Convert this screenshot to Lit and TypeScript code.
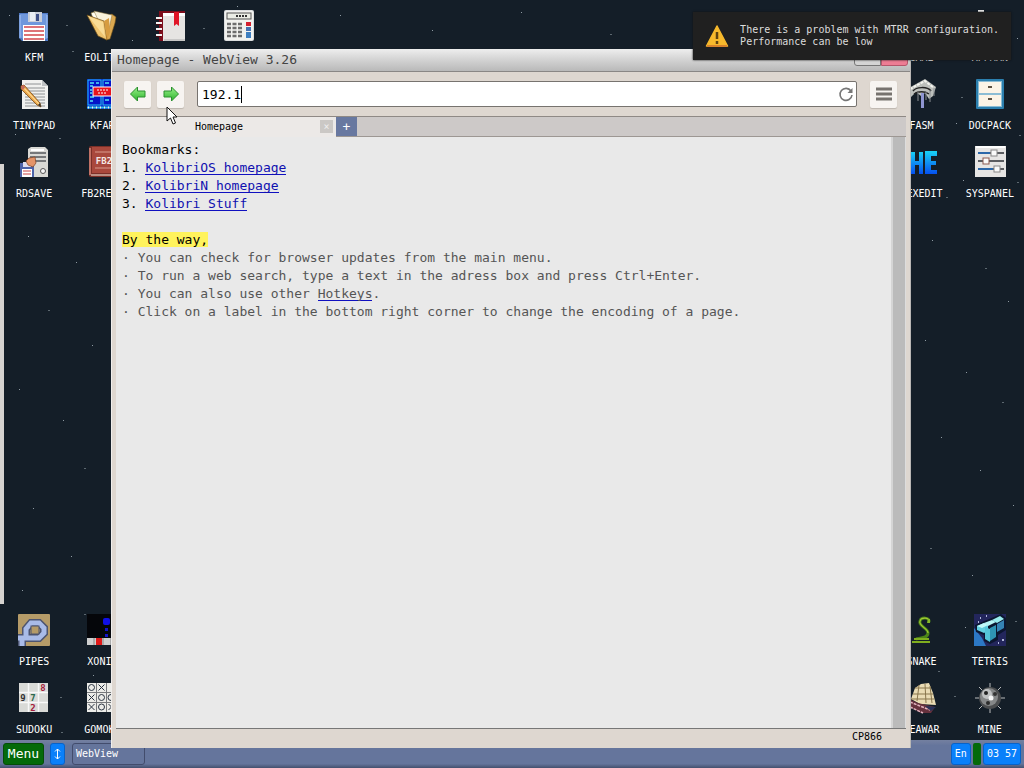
import { LitElement, html, css, svg, nothing } from "lit";
import { customElement } from "lit/decorators.js";

type Item = { name: string; art: unknown; col: number };

const floppy = svg`
  <path d="M1 3h29v28H4l-3-3z" fill="#4f78c4"/><path d="M2 4h27v25H5l-3-2z" fill="#6f97dc"/>
  <rect x="10" y="2" width="14" height="10" fill="#c9ced8"/><rect x="12" y="2" width="5" height="9" fill="#e9edf2"/><rect x="18" y="4" width="3" height="7" fill="#3d4f86"/>
  <rect x="5" y="15" width="22" height="16" fill="#fff"/><path d="M6 17h20M6 21h20M6 25h20M6 29h20" stroke="#d4454c" stroke-width="1.6"/>
  <path d="M2 5v23M29 5v23" stroke="#a9c6f7"/>`;

const folder = svg`
  <path d="M21 6l5-2 4 3-1 6-5 16-4 1z" fill="#dba850" stroke="#6b4b12" stroke-width=".6"/>
  <path d="M5 3l3-1 16 5-5 20-6-2z" fill="#fffdf2" stroke="#8a7338" stroke-width=".6"/><path d="M8 1l18 4-3 14-4 6z" fill="#f8f2dc" stroke="#8a7338" stroke-width=".5"/>
  <path d="M1 5l17 6 3 19-9-4z" fill="#efc470" stroke="#6b4b12" stroke-width=".7"/><path d="M2 6l15 6 2 15z" fill="#f9dc97"/><path d="M18 11l5-3 1 14-3 8z" fill="#d79c40"/>`;

const notebook = svg`
  <rect x="4" y="1" width="26" height="30" fill="#7d0e1c"/><rect x="8" y="3" width="22" height="28" fill="#e6e4e2"/><path d="M8 3h22v3H8z" fill="#fff"/>
  <path d="M19 2h5v14l-2.500-2-2.500 2z" fill="#e01527"/><path d="M1 8h6M1 13h6M1 19h6M1 25h6" stroke="#f4f4f4" stroke-width="2"/>
  <path d="M1 9.500h5M1 14.500h5M1 20.500h5M1 26.500h5" stroke="#4a0a10"/><path d="M9 30h21" stroke="#aaa"/>`;

const calc = svg`
  <rect x="1" y="0" width="30" height="31" rx="2" fill="#dcdedf"/><rect x="2" y="1" width="28" height="29" rx="1" fill="#f2f2ef"/>
  <rect x="4" y="3" width="24" height="6" fill="#eceee6" stroke="#555"/><path d="M13 6h12" stroke="#333" stroke-width="2" stroke-dasharray="2 1"/>
  <path d="M4 14h16M4 18h16M4 22h16M4 26h16" stroke="#6d6d6d" stroke-width="2.600" stroke-dasharray="4 1.500"/>
  <rect x="23" y="12" width="5" height="4" fill="#d3202f"/><rect x="23" y="17" width="5" height="4" fill="#4471b0"/><rect x="23" y="22" width="5" height="6" fill="#3f7fc0"/>`;

const notepad = svg`
  <path d="M4 2h20l6 6v23H4z" fill="#f1f1ef"/><path d="M24 2v6h6z" fill="#bfc2c4"/>
  <path d="M7 6h16M7 10h20M7 13h20M7 16h20M7 19h20M7 22h20M7 25h20M7 28h20" stroke="#8f9294"/>
  <path d="M3 8l3-1 16 18 1 4-4-2L3 11z" fill="#e9a54a" stroke="#7c4a12" stroke-width=".8"/><path d="M5 9l16 17" stroke="#ffd88c" stroke-width="1.200"/><path d="M20 27l3 2-1-4z" fill="#333"/><path d="M3 8l3-1 1 3-3 2z" fill="#c86b5a"/>`;

const kfar = svg`
  <rect x="1" y="1" width="30" height="30" fill="#0414c8"/><rect x="2" y="2" width="13" height="25" fill="none" stroke="#28c8f0"/><rect x="17" y="2" width="13" height="25" fill="none" stroke="#28c8f0"/>
  <path d="M4 5h4M10 5h3M4 8h3M4 12h2M4 15h2M4 19h4M4 23h3M19 5h4M25 5h3M19 22h4M25 22h3" stroke="#54e4f4" stroke-width="1.300"/>
  <rect x="7" y="9" width="19" height="9" fill="#e8141c" stroke="#fff"/><path d="M11 12h11M12 15h9" stroke="#fff" stroke-dasharray="2 1"/><path d="M1 29.500h30" stroke="#38c8e8" stroke-width="2"/><path d="M2 29.500h28" stroke="#eee" stroke-width="2" stroke-dasharray="1 3"/>`;

const rdsave = svg`
  <path d="M10 3l3-2h14l3 3v27H10z" fill="#d9d9d5"/><path d="M12 7h16M12 11h16M12 15h16" stroke="#55585c" stroke-width="1.400"/><path d="M13 4h13" stroke="#fff" stroke-width="2"/>
  <circle cx="25" cy="25" r="2.500" fill="#f8f8f8" stroke="#555"/><rect x="2" y="17" width="14" height="14" fill="#4b62a8"/><rect x="5" y="16" width="8" height="5" fill="#dde"/><rect x="4" y="23" width="10" height="8" fill="#fff"/>
  <path d="M5 25h8M5 28h8" stroke="#c44"/><path d="M11 12l6-1 1 6-3 4-5-2-2-4z" fill="#e49468" stroke="#7a3f22" stroke-width=".7"/>`;

const book = svg`
  <rect x="3" y="0" width="28" height="31" rx="2" fill="#7c3028"/><rect x="6" y="1" width="25" height="26" fill="#a9483c"/><path d="M4 2v27" stroke="#d7877a" stroke-width="1.500"/>
  <path d="M9 6h20M9 22h20" stroke="#d99b8c"/><path d="M5 29h25" stroke="#d0aea2" stroke-width="1.500"/>
  <text x="18" y="18" text-anchor="middle" class="art-text" fill="#f4e8e4">FB2</text>`;

const fasm = svg`
  <path d="M1 11L19 1l11 8-3 9-4 3-4-6-4 3-5-4-6 6z" fill="#bcbfbb"/><path d="M4 11L19 3l9 7" fill="none" stroke="#f3f3ee" stroke-width="2" stroke-dasharray="3 1"/>
  <path d="M7 13c3-4 14-5 18 0M8 16c4-3 11-3 15 0" fill="none" stroke="#222" stroke-width="1.500"/><path d="M12 14v9M20 14v8M24 12v12M28 10v8" stroke="#8a8e92"/><path d="M16.500 15v15" stroke="#8f95d1" stroke-width="3"/>`;

const docpack = svg`
  <rect x="2" y="1" width="28" height="30" rx="1" fill="#2b7fae"/><rect x="4" y="3" width="24" height="26" fill="#8bbdd4"/><rect x="5" y="4" width="22" height="11" fill="#fbf4e6"/><rect x="5" y="17" width="22" height="11" fill="#fbf4e6"/>
  <path d="M14 9h4M14 21h4" stroke="#5b5142" stroke-width="2"/>`;

const hexedit = svg`
  <defs><linearGradient id="hx" gradientUnits="userSpaceOnUse" x1="0" x2="0" y1="5" y2="28"><stop offset="0" stop-color="#19d3f4"/><stop offset="1" stop-color="#0550f0"/></linearGradient></defs>
  <path d="M4 6h5v9h4V6h4v22h-4v-9H9v9H4zM19 5h12v5h-6v5h5v4h-5v5h6v4H19z" fill="url(#hx)"/>`;

const syspanel = svg`
  <rect x="1" y="0" width="31" height="31" fill="#e6e5e4"/><path d="M2 1h29" stroke="#fff" stroke-width="2"/>
  <path d="M4 7h26M4 15h26M4 23h26" stroke="#2e3136" stroke-width="1.500"/><path d="M4 7h12M4 23h15" stroke="#2b67a9" stroke-width="2"/>
  <rect x="17" y="4" width="6" height="6" fill="#fafafa" stroke="#888"/><rect x="9" y="12" width="6" height="6" fill="#fafafa" stroke="#8a5a50"/><rect x="20" y="20" width="6" height="6" fill="#fafafa" stroke="#888"/>`;

const pipes = svg`
  <rect x="0" y="0" width="32" height="32" rx="1" fill="#b59b68"/>
  <path d="M0 24h8v-9l5-6h8l5 5v5l-5 5H0M4 32v-8" fill="none" stroke="#4d5470" stroke-width="8"/>
  <path d="M0 24h8v-9l5-6h8l5 5v5l-5 5H0M4 32v-8" fill="none" stroke="#a9bbe8" stroke-width="5"/><rect x="13" y="12" width="8" height="8" fill="#b59b68" stroke="#4d5470"/>`;

const xonix = svg`
  <rect x="1" y="0" width="31" height="31" fill="#05060a"/><rect x="17" y="4" width="7" height="7" rx="2" fill="#1010e8"/><path d="M20.500 14v3M20.500 20v3" stroke="#1414c8" stroke-width="3"/>
  <rect x="1" y="24" width="31" height="7" fill="#cfcfcf"/><rect x="10" y="24" width="6" height="7" fill="#e01818"/><path d="M8 24v7M17 24v7M25 24v7" stroke="#888"/>`;

const sudoku = svg`
  <rect x="1" y="1" width="29" height="29" fill="#d9dad7"/><path d="M10.500 1v29M20.500 1v29M1 10.500h29M1 20.500h29" stroke="#f8f8f8" stroke-width="1.500"/>
  <g class="art-text" text-anchor="middle"><text x="25" y="9" fill="#a51c3c">8</text><text x="5" y="19" fill="#333">9</text><text x="15" y="19" fill="#2b6a4c">7</text><text x="15" y="29" fill="#a51c3c">2</text></g>`;

const gomoku = svg`
  <rect x="1" y="1" width="30" height="29" fill="#ecece8"/><path d="M10.500 1v29M20.500 1v29M1 10.500h30M1 20.500h30" stroke="#77797c"/>
  <g fill="none" stroke="#2a3442"><circle cx="5.500" cy="5.500" r="3"/><circle cx="15.500" cy="15.500" r="3"/><circle cx="25" cy="15.500" r="3"/><circle cx="15.500" cy="25" r="3"/><path d="M12.500 2.500l6 6m0-6l-6 6M2.500 12.500l6 6m0-6l-6 6M2.500 22l6 6m0-6l-6 6M22.500 22l6 6m0-6l-6 6"/></g>`;

const snake = svg`
  <path d="M23 8c1-5-8-5-9-1-2 5 8 7 8 12 0 5-7 5-12 6" fill="none" stroke="#4b8218" stroke-width="3"/><path d="M23 8c1-5-8-5-9-1-2 5 8 7 8 12" fill="none" stroke="#a4cc35" stroke-width="1.200"/>
  <path d="M8 25h15M6 28h18" stroke="#7fae1f" stroke-width="1.800"/><path d="M22 5h2v4h-3z" fill="#86b82a"/>`;

const tetris = svg`
  <rect width="32" height="32" fill="#23265c"/><path d="M0 14l8 10 4 8H0z" fill="#2c78c5"/><path d="M6 4h1M12 2h1M28 26h2M24 29h1M4 8h1" stroke="#dfe6ff" stroke-width="1.500"/>
  <path d="M1 11L27 0l5 4v12l-8 5v5l-8 4-6-3v-6l-8-3z" fill="#0c1630"/>
  <path d="M3 12l7-3 4 2 0 6-4 2-7-3z" fill="#62cfe0"/><path d="M10 9l8-3 4 2-8 4z" fill="#b6f6f6"/><path d="M18 6l8-4 4 3-7 4z" fill="#98ecee"/>
  <path d="M11 13l5 2v13l-5-3z" fill="#54c4d8"/><path d="M16 14l6-3v12l-6 4z" fill="#2f94b4"/><path d="M23 10l7-4v8l-7 4z" fill="#3583b4"/><path d="M3 12l7-3 4 2-6 3z" fill="#c2fafa"/>`;

const ship = svg`
  <path d="M9 6l6-4 8-1 4 10 3 12-16-1L5 17z" fill="#eadcb4"/><path d="M9 6h16M7 12h20M5 17h23M13 3l-2 16M19 2l1 19M24 4l2 17" stroke="#89764d"/>
  <path d="M3 17l9 4 17 4-4 6H15L4 25z" fill="#66313d"/><path d="M4 20l20 8M4 25l13 6" stroke="#e3b4c0" stroke-width="1.500" stroke-dasharray="3 1"/><path d="M19 24l11 1-5 4z" fill="#283259"/>`;

const mine = svg`
  <path d="M16 1v30M1 16h30M5 5l22 22M27 5L5 27" stroke="#b9bbbc"/><circle cx="16" cy="16" r="11" fill="#4b4d4f"/><circle cx="15" cy="15" r="9" fill="#858788"/>
  <circle cx="13" cy="12" r="5" fill="#bfc1c2"/><circle cx="12" cy="11" r="2" fill="#222"/><circle cx="17" cy="16" r="2.500" fill="#f5f5f5"/><circle cx="21" cy="12" r="2" fill="#333"/><circle cx="14" cy="21" r="2" fill="#2c2c2c"/>`;

const spark = svg`<path d="M4 1h6" stroke="#eee" stroke-width="2"/>`;

const topRows: Item[][] = [
  [
    { name: "KFM", art: floppy, col: 1 }, { name: "EOLITE", art: folder, col: 2 },
    { name: "", art: notebook, col: 3 }, { name: "", art: calc, col: 4 },
    { name: "GAME", art: nothing, col: 14 }, { name: "APPMAN", art: spark, col: 15 },
  ],
  [
    { name: "TINYPAD", art: notepad, col: 1 }, { name: "KFAR", art: kfar, col: 2 },
    { name: "FASM", art: fasm, col: 14 }, { name: "DOCPACK", art: docpack, col: 15 },
  ],
  [
    { name: "RDSAVE", art: rdsave, col: 1 }, { name: "FB2READ", art: book, col: 2 },
    { name: "HEXEDIT", art: hexedit, col: 14 }, { name: "SYSPANEL", art: syspanel, col: 15 },
  ],
];
const bottomRows: Item[][] = [
  [
    { name: "PIPES", art: pipes, col: 1 }, { name: "XONIX", art: xonix, col: 2 },
    { name: "SNAKE", art: snake, col: 14 }, { name: "TETRIS", art: tetris, col: 15 },
  ],
  [
    { name: "SUDOKU", art: sudoku, col: 1 }, { name: "GOMOKU", art: gomoku, col: 2 },
    { name: "SEAWAR", art: ship, col: 14 }, { name: "MINE", art: mine, col: 15 },
  ],
];

const stars: [number, number, number][] = [
  [9, 15, 1], [66, 25, 2], [72, 51, 2], [132, 40, 1], [203, 28, 2], [237, 6, 1], [340, 15, 1], [432, 30, 1], [521, 12, 1], [610, 34, 2], [59, 138, 2], [15, 134, 1],
  [28, 236, 1], [76, 262, 1], [48, 310, 2], [92, 345, 1], [19, 389, 1], [63, 420, 1], [84, 468, 2], [33, 508, 1], [71, 556, 1], [22, 590, 1], [84, 614, 2], [93, 675, 1], [60, 697, 2], [61, 732, 2],
  [961, 97, 2], [956, 123, 1], [1019, 135, 2], [963, 180, 1], [1017, 182, 2], [946, 197, 2], [932, 240, 1], [985, 268, 2], [1008, 301, 1], [925, 340, 1], [966, 372, 1], [1002, 402, 2], [941, 437, 1], [980, 470, 1], [1013, 505, 1], [930, 548, 2], [972, 575, 1], [1015, 621, 2], [965, 627, 1], [938, 671, 2], [954, 696, 2], [1017, 38, 1],
];

@customElement("desktop-icon")
class DesktopIcon extends LitElement {
  static properties = { item: { attribute: false } };
  declare item: Item;
  static styles = css`
    :host { display: block; }
    .icon { display: flex; flex-direction: column; align-items: center; gap: 10px; color: #fff; text-decoration: none; font: 10px/12px "DejaVu Sans Mono", monospace; white-space: nowrap; }
    .art { width: 32px; height: 32px; display: block; }
    .art-text { font: bold 9px "DejaVu Sans Mono", monospace; }
  `;
  render() {
    return html`<a class="icon" href="#" aria-label=${this.item.name || "Application"}>
      <svg class="art" viewBox="0 0 32 32" aria-hidden="true">${this.item.art}</svg>
      <span>${this.item.name}</span></a>`;
  }
}

@customElement("web-view")
class WebView extends LitElement {
  static styles = css`
    :host { display: flex; flex-direction: column; box-sizing: border-box; background: #ded7d0; color: #000; font: 13px/18px "DejaVu Sans Mono", monospace; border-right: 1px solid #b9b7b5; border-left: 1px solid #f0eeec; }
    * { box-sizing: border-box; }
    .title { display: flex; justify-content: space-between; align-items: flex-start; height: 23px; padding: 0 2px 0 5px; background: linear-gradient(#eee, #d5d5d5 45%, #b9b9b9); border-bottom: 1px solid #8a8785; color: #444; }
    .title h1 { margin: 0; font: inherit; line-height: 22px; }
    .ctl { display: flex; }
    .ctl button { width: 27px; height: 17px; padding: 0; border: 1px solid #777; border-radius: 0 0 0 3px; background: #d4d4d4; }
    .ctl .close { border-radius: 0 0 3px 0; background: #ed7d94; border-color: #b5566b; }
    .inner { flex: 1; display: flex; flex-direction: column; min-height: 0; padding: 0 4px; }
    .bar { display: flex; gap: 6px; align-items: center; height: 44px; padding: 0 9px 0 8px; }
    .tool { display: grid; place-items: center; width: 27px; height: 27px; padding: 0; border: 0; border-radius: 2px; background: #f7f4f1; box-shadow: 0 1px 1px #bdb6af; }
    .address { flex: 1; position: relative; display: flex; align-items: center; height: 26px; margin: 0 7px; background: #fff; border: 1px solid #77736f; border-radius: 2px; }
    .address input { flex: 1; min-width: 0; border: 0; outline: 0; padding: 0 0 0 4px; background: transparent; font: inherit; color: #000; height: 24px; }
    .caret { position: absolute; left: calc(4px + 5ch); top: 4px; width: 1px; height: 17px; background: #000; }
    .reload { display: grid; padding: 0; margin-right: 2px; border: 0; background: none; }
    .tabs { display: flex; height: 21px; background: #cdc9c8; border-top: 1px solid #8f8985; border-bottom: 1px solid #9d9793; font: 10px/20px "DejaVu Sans Mono", monospace; }
    .tab { display: flex; align-items: center; justify-content: center; position: relative; width: 220px; margin-bottom: -1px; padding-right: 14px; background: #ece9e7; }
    .tab .x { position: absolute; right: 3px; top: 3px; width: 13px; height: 13px; padding: 0; border: 0; background: #cbc8c5; color: #eee; font: 10px/12px "DejaVu Sans Mono", monospace; }
    .plus { width: 21px; padding: 0; border: 0; background: #6878a0; color: #fff; font: 13px/18px "DejaVu Sans Mono", monospace; }
    .page { flex: 1; display: flex; min-height: 0; background: #e9e9e9; border-bottom: 1px solid #777; }
    .doc { flex: 1; padding: 4px 6px; color: #555; overflow: hidden; }
    .doc p, .doc ol, .doc ul { margin: 0; padding: 0; list-style: none; }
    .dark { color: #000; }
    .doc .gap { margin-top: 18px; }
    .doc a { display: inline-block; height: 16px; line-height: 18px; vertical-align: top; color: #1010b0; text-decoration: none; border-bottom: 1px solid #1010c0; }
    .doc .soft { color: #555; }
    .mark { background: #fff35c; color: #000; }
    li { white-space: pre; }
    .scroll { width: 15px; background: #bbb; border-left: 2px solid #d5d5d5; border-right: 1px solid #ddd; }
    .status { height: 19px; padding: 0 24px 0 0; text-align: right; font: 10px/16px "DejaVu Sans Mono", monospace; }
  `;
  arrow(flip: boolean) {
    return html`<svg width="18" height="18" viewBox="0 0 18 18" aria-hidden="true">
      <defs><linearGradient id="g" x2="0" y2="1"><stop offset="0" stop-color="#9af08a"/><stop offset="1" stop-color="#2cb42c"/></linearGradient></defs>
      <path transform=${flip ? "translate(18 0) scale(-1 1)" : "translate(0 0)"} d="M1.500 9L8.500 2v4H16v6H8.500v4z" fill="url(#g)" stroke="#2a8f2e" stroke-linejoin="round"/></svg>`;
  }
  render() {
    return html`
      <header class="title"><h1>Homepage - WebView 3.26</h1>
        <div class="ctl"><button aria-label="Minimize"></button><button class="close" aria-label="Close"></button></div></header>
      <div class="inner">
        <nav class="bar">
          <button class="tool" aria-label="Back">${this.arrow(false)}</button>
          <button class="tool" aria-label="Forward">${this.arrow(true)}</button>
          <div class="address"><input type="text" aria-label="Address" value="192.1"><span class="caret"></span>
            <button class="reload" aria-label="Reload"><svg width="16" height="16" viewBox="0 0 16 16"><path d="M13 5A6 6 0 1 0 14 9" fill="none" stroke="#777" stroke-width="1.600"/><path d="M14.500 2v5h-5z" fill="#777"/></svg></button>
          </div>
          <button class="tool" aria-label="Menu"><svg width="16" height="14" viewBox="0 0 16 14"><path d="M0 2h16M0 7h16M0 12h16" stroke="#77736f" stroke-width="3"/></svg></button>
        </nav>
        <div class="tabs"><div class="tab"><span class="dark">Homepage</span><button class="x" aria-label="Close tab">×</button></div><button class="plus" aria-label="New tab">+</button></div>
        <main class="page">
          <div class="doc">
            <p class="dark">Bookmarks:</p>
            <ol class="dark">
              <li>1. <a href="#">KolibriOS homepage</a></li>
              <li>2. <a href="#">KolibriN homepage</a></li>
              <li>3. <a href="#">Kolibri Stuff</a></li>
            </ol>
            <p class="gap"><span class="mark">By the way,</span></p>
            <ul>
              <li>· You can check for browser updates from the main menu.</li>
              <li>· To run a web search, type a text in the adress box and press Ctrl+Enter.</li>
              <li>· You can also use other <a class="soft" href="#">Hotkeys</a>.</li>
              <li>· Click on a label in the bottom right corner to change the encoding of a page.</li>
            </ul>
          </div>
          <div class="scroll"></div>
        </main>
        <footer class="status">CP866</footer>
      </div>`;
  }
}

@customElement("app-root")
class AppRoot extends LitElement {
  static styles = css`
    :host { display: flex; flex-direction: column; position: relative; height: 100vh; overflow: hidden; background: #141e28; color: #fff; font: 10px/12px "DejaVu Sans Mono", monospace; }
    * { box-sizing: border-box; }
    .stars { position: absolute; inset: 0; width: 100%; height: 100%; }
    .desk { position: relative; flex: 1; display: flex; flex-direction: column; gap: 14px; padding: 10px 0 4px; }
    .row { display: grid; grid-template-columns: repeat(15, minmax(0, 1fr)); height: 54px; }
    .space { flex: 1; }
    .side { position: absolute; left: 0; top: 164px; bottom: 164px; width: 4px; background: #d6d3d0; }
    .win { position: absolute; left: 111px; right: 113px; top: 49px; bottom: 20px; }
    .task { display: flex; align-items: center; gap: 6px; height: 28px; padding: 0 3px; background: linear-gradient(#7480a0, #65759c 20%, #65759c 85%, #44506e); }
    .task button { height: 22px; padding: 0 3px; border: 1px solid #0862c8; border-radius: 3px; background: #0a80fa; color: #fff; font: inherit; }
    .task .menu { width: 41px; padding: 0; border-color: #044d08; background: #046a0a; font: 13px/18px "DejaVu Sans Mono", monospace; }
    .task .swap { display: grid; place-items: center; width: 15px; padding: 0; }
    .task .app { width: 73px; margin-left: 1px; text-align: left; background: #65759c; border-color: #424c6c; }
    .tray { margin-left: auto; display: flex; gap: 2px; }
    .cpu { width: 8px; height: 22px; border-radius: 2px; background: #046a0a; }
    .note { position: absolute; top: 12px; right: 13px; display: flex; align-items: center; gap: 11px; height: 48px; padding: 0 12px; background: #202020; color: #ddd; box-shadow: 0 0 2px #111; }
    .pointer { position: absolute; left: 166px; top: 106px; }
  `;
  row(items: Item[]) {
    return html`<div class="row">${items.map((i) => html`<desktop-icon style="grid-column:${i.col}" .item=${i}></desktop-icon>`)}</div>`;
  }
  render() {
    return html`
      <svg class="stars" viewBox="0 0 1024 768" preserveAspectRatio="xMidYMid slice" aria-hidden="true">
        ${stars.map(([x, y, s]) => svg`<rect x=${x} y=${y} width=${s} height="1" fill=${s > 1 ? "#5d6870" : "#8f9aa2"}/>`)}
      </svg>
      <div class="desk">${topRows.map((r) => this.row(r))}<div class="space"></div>${bottomRows.map((r) => this.row(r))}</div>
      <footer class="task">
        <button class="menu">Menu</button>
        <button class="swap" aria-label="Minimize all"><svg width="7" height="12" viewBox="0 0 7 12"><path d="M3.500 1v10M1 3.500l2.500-2.500L6 3.500M1 8.500L3.500 11 6 8.500" fill="none" stroke="#fff"/></svg></button>
        <button class="app">WebView</button>
        <div class="tray"><button class="lang">En</button><span class="cpu"></span><button class="clock">03 57</button></div>
      </footer>
      <div class="side"></div>
      <web-view class="win"></web-view>
      <div class="note" role="alert">
        <svg width="24" height="24" viewBox="0 0 24 24" aria-hidden="true"><path d="M12 2l10.500 20h-21z" fill="#f7b92c" stroke="#f7b92c" stroke-width="1.500" stroke-linejoin="round"/><path d="M2 22h20" stroke="#d9832b" stroke-width="2"/><path d="M12 8v7M12 17v3" stroke="#5e4210" stroke-width="2.500"/></svg>
        <span>There is a problem with MTRR configuration.<br>Performance can be low</span>
      </div>
      <svg class="pointer" width="12" height="19" viewBox="0 0 12 19" aria-hidden="true"><path d="M1 1v14l3.500-3 2.500 6 2.500-1-2.500-6H11z" fill="#fff" stroke="#111"/></svg>`;
  }
}
